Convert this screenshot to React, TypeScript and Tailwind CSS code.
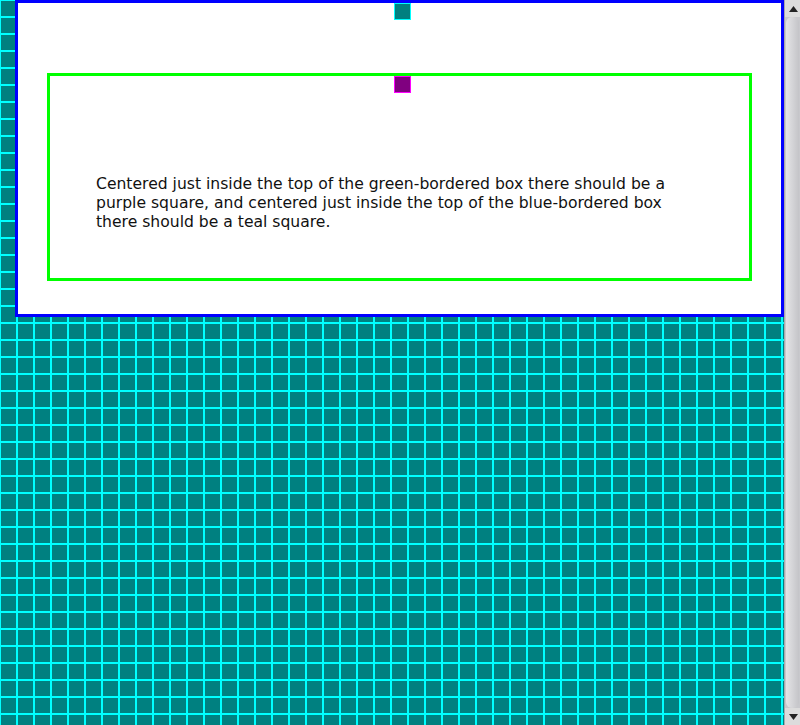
import React from 'react';

const ScrollArrow = ({ up }: { up: boolean }) => (
  <div className="h-[17px] w-[16px] flex items-center justify-center bg-[#dcdcdc]">
    <svg width="9" height="6" viewBox="0 0 9 6">
      {up ? <polygon points="4.5,0 9,6 0,6" fill="#222" /> : <polygon points="0,0 9,0 4.5,6" fill="#222" />}
    </svg>
  </div>
);

const App: React.FC = () => {
  return (
    <div className="w-[800px] h-[725px] flex overflow-hidden" style={{ fontFamily: '"DejaVu Sans", sans-serif' }}>
      <div className="w-[784px] h-[725px] bg-[#008080] bg-[linear-gradient(to_right,transparent_15px,#00ffff_15px),linear-gradient(to_bottom,transparent_15px,#00ffff_15px)] bg-[length:17px_17px] bg-[position:1px_1px]">
        <div className="ml-[15px] w-[769px] h-[317px] border-[3px] border-[#0000ff] bg-white flex flex-col items-center">
          <div className="ml-[6px] w-[17px] h-[17px] border border-[#00ffff] bg-[#008080]" />
          <div className="mt-[53px] self-start ml-[29px] w-[705px] h-[208px] border-[3px] border-[#00ff00] flex flex-col items-center">
            <div className="ml-[6px] w-[17px] h-[17px] border border-[#ff00ff] bg-[#800080]" />
            <p className="self-start ml-[46px] mt-[82px] w-[590px] text-[15.6px] leading-[19px] text-[#111]">
              Centered just inside the top of the green-bordered box there should be a purple square, and centered just inside the top of the blue-bordered box there should be a teal square.
            </p>
          </div>
        </div>
      </div>
      <div className="w-[16px] h-[725px] flex flex-col bg-[#c8c8cc] border-l border-[#a8a8ac]">
        <ScrollArrow up />
        <div className="flex-1 mx-[1px] rounded-t-[6px] rounded-b-[6px] bg-[linear-gradient(to_right,#e4e4e6,#c4c4c8)]" />
        <ScrollArrow up={false} />
      </div>
    </div>
  );
};

export default App;
